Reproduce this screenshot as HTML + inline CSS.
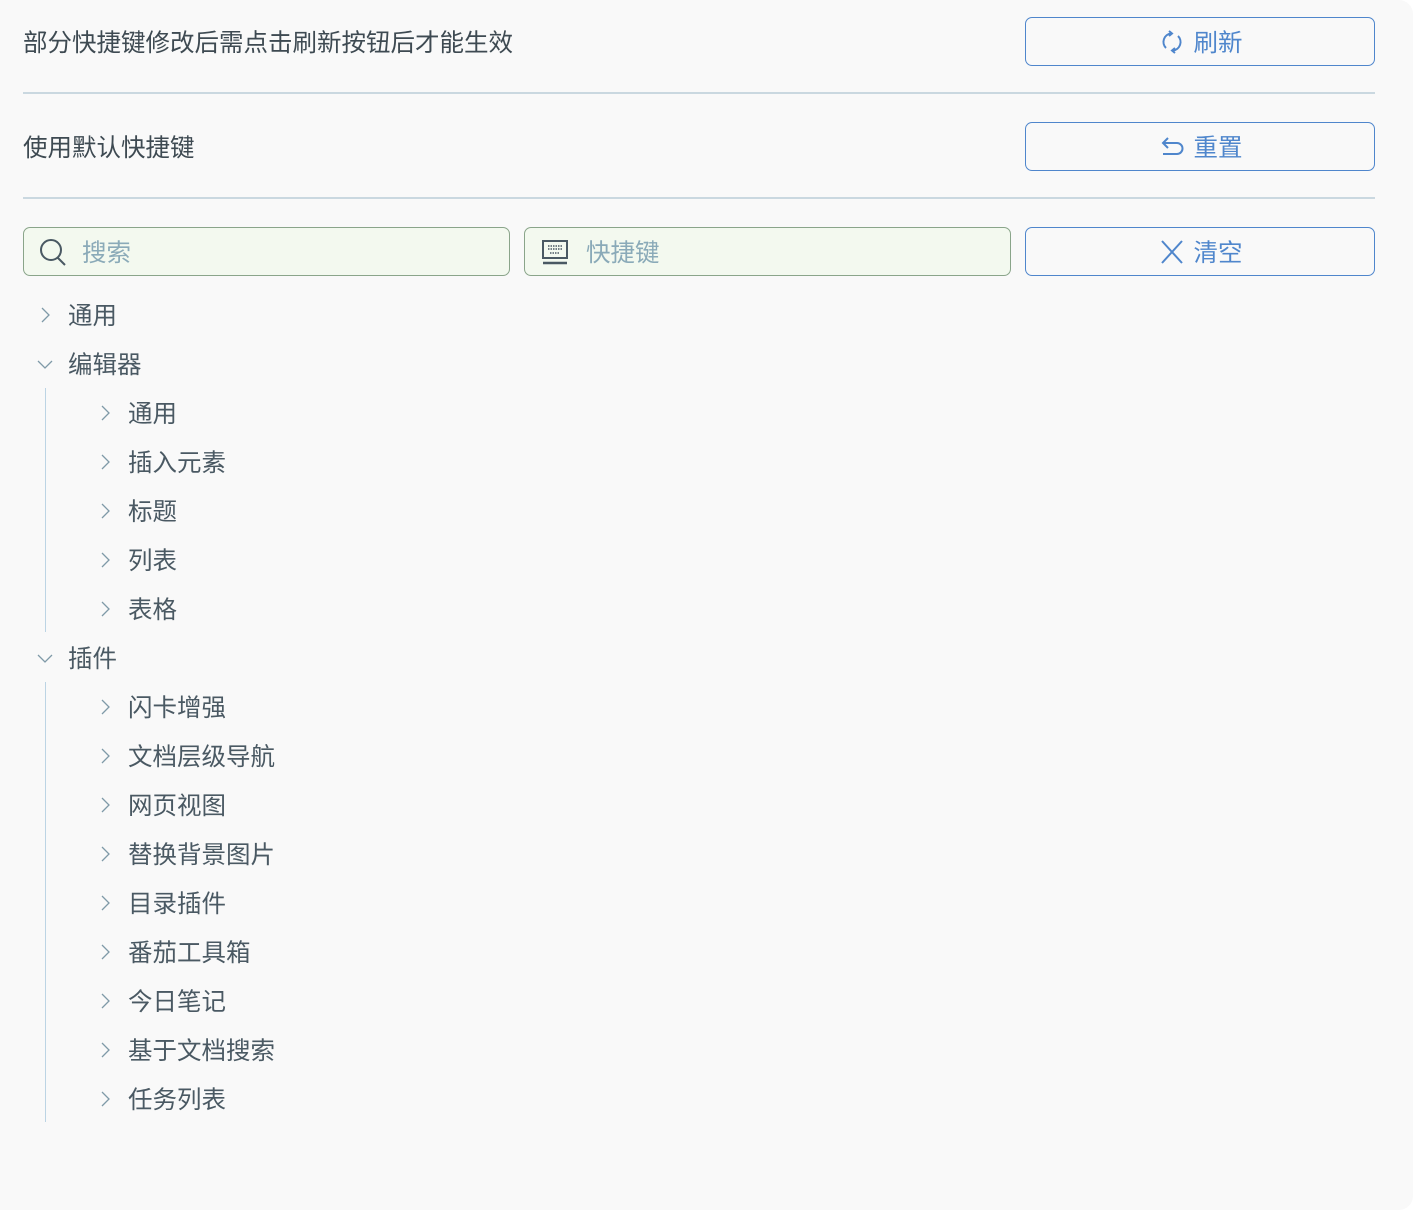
<!DOCTYPE html>
<html><head><meta charset="utf-8"><style>
html,body{margin:0;padding:0;background:#fff;}
#w{position:absolute;left:0;top:0;width:1413px;height:1210px;background:#f9f9f9;border-radius:0 14px 14px 0;font-family:"Liberation Sans","Noto Sans CJK SC",sans-serif;overflow:hidden}
.t{position:absolute;font-size:24.5px;line-height:30px;color:#3e4a52;white-space:nowrap}
.hr{position:absolute;left:23px;width:1352px;height:2px;background:#cad8e0}
.btn{position:absolute;left:1025px;width:348px;height:47px;border:1px solid #4f86cc;border-radius:7px;color:#4f86cc;font-size:24.5px;display:flex;align-items:center;justify-content:center;gap:8px}
.btn svg{width:28px;height:28px}
.inp{position:absolute;top:227px;height:47px;border:1px solid #8aa58a;border-radius:7px;background:#f3f9ef;display:flex;align-items:center;color:#8aaab8;font-size:24.5px}
.tr{position:absolute;font-size:24.5px;line-height:30px;color:#4a5963;white-space:nowrap}
.ar{position:absolute;width:16px;height:16px}
.vl{position:absolute;left:45px;width:1px;background:#bcd4e4}
</style></head><body><div id="w">
<div class="t" style="left:23px;top:29px">部分快捷键修改后需点击刷新按钮后才能生效</div>
<div class="btn" style="top:17px"><svg viewBox="0 0 28 28" fill="none" stroke="#4f86cc" stroke-width="2"><path d="M8 20A8.5 8.5 0 0 1 13 5.5"/><path d="M20 8A8.5 8.5 0 0 1 15 22.5"/><path d="M11 3l3 2.5-3 2.5"/><path d="M17 25l-3-2.5 3-2.5"/></svg>刷新</div>
<div class="hr" style="top:92px"></div>
<div class="t" style="left:23px;top:134px">使用默认快捷键</div>
<div class="btn" style="top:122px"><svg viewBox="0 0 28 28" fill="none" stroke="#4f86cc" stroke-width="2"><path d="M6 10h13a5.5 5.5 0 0 1 0 11h-14"/><path d="M10 5L5 10l5 5"/></svg>重置</div>
<div class="hr" style="top:197px"></div>
<div class="inp" style="left:23px;width:485px"><svg style="margin:0 14px 0 14px" width="30" height="30" viewBox="0 0 30 30" fill="none" stroke="#4a5963" stroke-width="2"><circle cx="13" cy="13" r="10"/><path d="M20 21l7 7"/></svg>搜索</div>
<div class="inp" style="left:524px;width:485px"><svg style="margin:0 16px 0 15px" width="30" height="30" viewBox="0 0 30 30" fill="none" stroke="#4a5963" stroke-width="2"><rect x="3" y="4" width="24" height="17"/><path d="M3 26h24" stroke-width="2.5"/><path d="M8 9h14M8 12h14M10 16h10" stroke-dasharray="1.5 1" stroke-width="1.6"/></svg>快捷键</div>
<div class="btn" style="top:227px"><svg viewBox="0 0 28 28" fill="none" stroke="#4f86cc" stroke-width="2"><path d="M4 3l20 22M24 3L4 25"/></svg>清空</div>

<svg class="ar" style="left:37px;top:307px" viewBox="0 0 16 16" fill="none" stroke="#7f9aa8" stroke-width="1.3"><path d="M5 1l7 7-7 7"/></svg>
<div class="tr" style="left:68px;top:302px">通用</div>
<svg class="ar" style="left:37px;top:356px" viewBox="0 0 16 16" fill="none" stroke="#7f9aa8" stroke-width="1.3"><path d="M1 5l7 7 7-7"/></svg>
<div class="tr" style="left:68px;top:351px">编辑器</div>
<div class="vl" style="top:388px;height:244px"></div>
<svg class="ar" style="left:97px;top:405px" viewBox="0 0 16 16" fill="none" stroke="#7f9aa8" stroke-width="1.3"><path d="M5 1l7 7-7 7"/></svg><div class="tr" style="left:128px;top:400px">通用</div>
<svg class="ar" style="left:97px;top:454px" viewBox="0 0 16 16" fill="none" stroke="#7f9aa8" stroke-width="1.3"><path d="M5 1l7 7-7 7"/></svg><div class="tr" style="left:128px;top:449px">插入元素</div>
<svg class="ar" style="left:97px;top:503px" viewBox="0 0 16 16" fill="none" stroke="#7f9aa8" stroke-width="1.3"><path d="M5 1l7 7-7 7"/></svg><div class="tr" style="left:128px;top:498px">标题</div>
<svg class="ar" style="left:97px;top:552px" viewBox="0 0 16 16" fill="none" stroke="#7f9aa8" stroke-width="1.3"><path d="M5 1l7 7-7 7"/></svg><div class="tr" style="left:128px;top:547px">列表</div>
<svg class="ar" style="left:97px;top:601px" viewBox="0 0 16 16" fill="none" stroke="#7f9aa8" stroke-width="1.3"><path d="M5 1l7 7-7 7"/></svg><div class="tr" style="left:128px;top:596px">表格</div>
<svg class="ar" style="left:37px;top:650px" viewBox="0 0 16 16" fill="none" stroke="#7f9aa8" stroke-width="1.3"><path d="M1 5l7 7 7-7"/></svg>
<div class="tr" style="left:68px;top:645px">插件</div>
<div class="vl" style="top:682px;height:440px"></div>
<svg class="ar" style="left:97px;top:699px" viewBox="0 0 16 16" fill="none" stroke="#7f9aa8" stroke-width="1.3"><path d="M5 1l7 7-7 7"/></svg><div class="tr" style="left:128px;top:694px">闪卡增强</div>
<svg class="ar" style="left:97px;top:748px" viewBox="0 0 16 16" fill="none" stroke="#7f9aa8" stroke-width="1.3"><path d="M5 1l7 7-7 7"/></svg><div class="tr" style="left:128px;top:743px">文档层级导航</div>
<svg class="ar" style="left:97px;top:797px" viewBox="0 0 16 16" fill="none" stroke="#7f9aa8" stroke-width="1.3"><path d="M5 1l7 7-7 7"/></svg><div class="tr" style="left:128px;top:792px">网页视图</div>
<svg class="ar" style="left:97px;top:846px" viewBox="0 0 16 16" fill="none" stroke="#7f9aa8" stroke-width="1.3"><path d="M5 1l7 7-7 7"/></svg><div class="tr" style="left:128px;top:841px">替换背景图片</div>
<svg class="ar" style="left:97px;top:895px" viewBox="0 0 16 16" fill="none" stroke="#7f9aa8" stroke-width="1.3"><path d="M5 1l7 7-7 7"/></svg><div class="tr" style="left:128px;top:890px">目录插件</div>
<svg class="ar" style="left:97px;top:944px" viewBox="0 0 16 16" fill="none" stroke="#7f9aa8" stroke-width="1.3"><path d="M5 1l7 7-7 7"/></svg><div class="tr" style="left:128px;top:939px">番茄工具箱</div>
<svg class="ar" style="left:97px;top:993px" viewBox="0 0 16 16" fill="none" stroke="#7f9aa8" stroke-width="1.3"><path d="M5 1l7 7-7 7"/></svg><div class="tr" style="left:128px;top:988px">今日笔记</div>
<svg class="ar" style="left:97px;top:1042px" viewBox="0 0 16 16" fill="none" stroke="#7f9aa8" stroke-width="1.3"><path d="M5 1l7 7-7 7"/></svg><div class="tr" style="left:128px;top:1037px">基于文档搜索</div>
<svg class="ar" style="left:97px;top:1091px" viewBox="0 0 16 16" fill="none" stroke="#7f9aa8" stroke-width="1.3"><path d="M5 1l7 7-7 7"/></svg><div class="tr" style="left:128px;top:1086px">任务列表</div>
</div></body></html>
